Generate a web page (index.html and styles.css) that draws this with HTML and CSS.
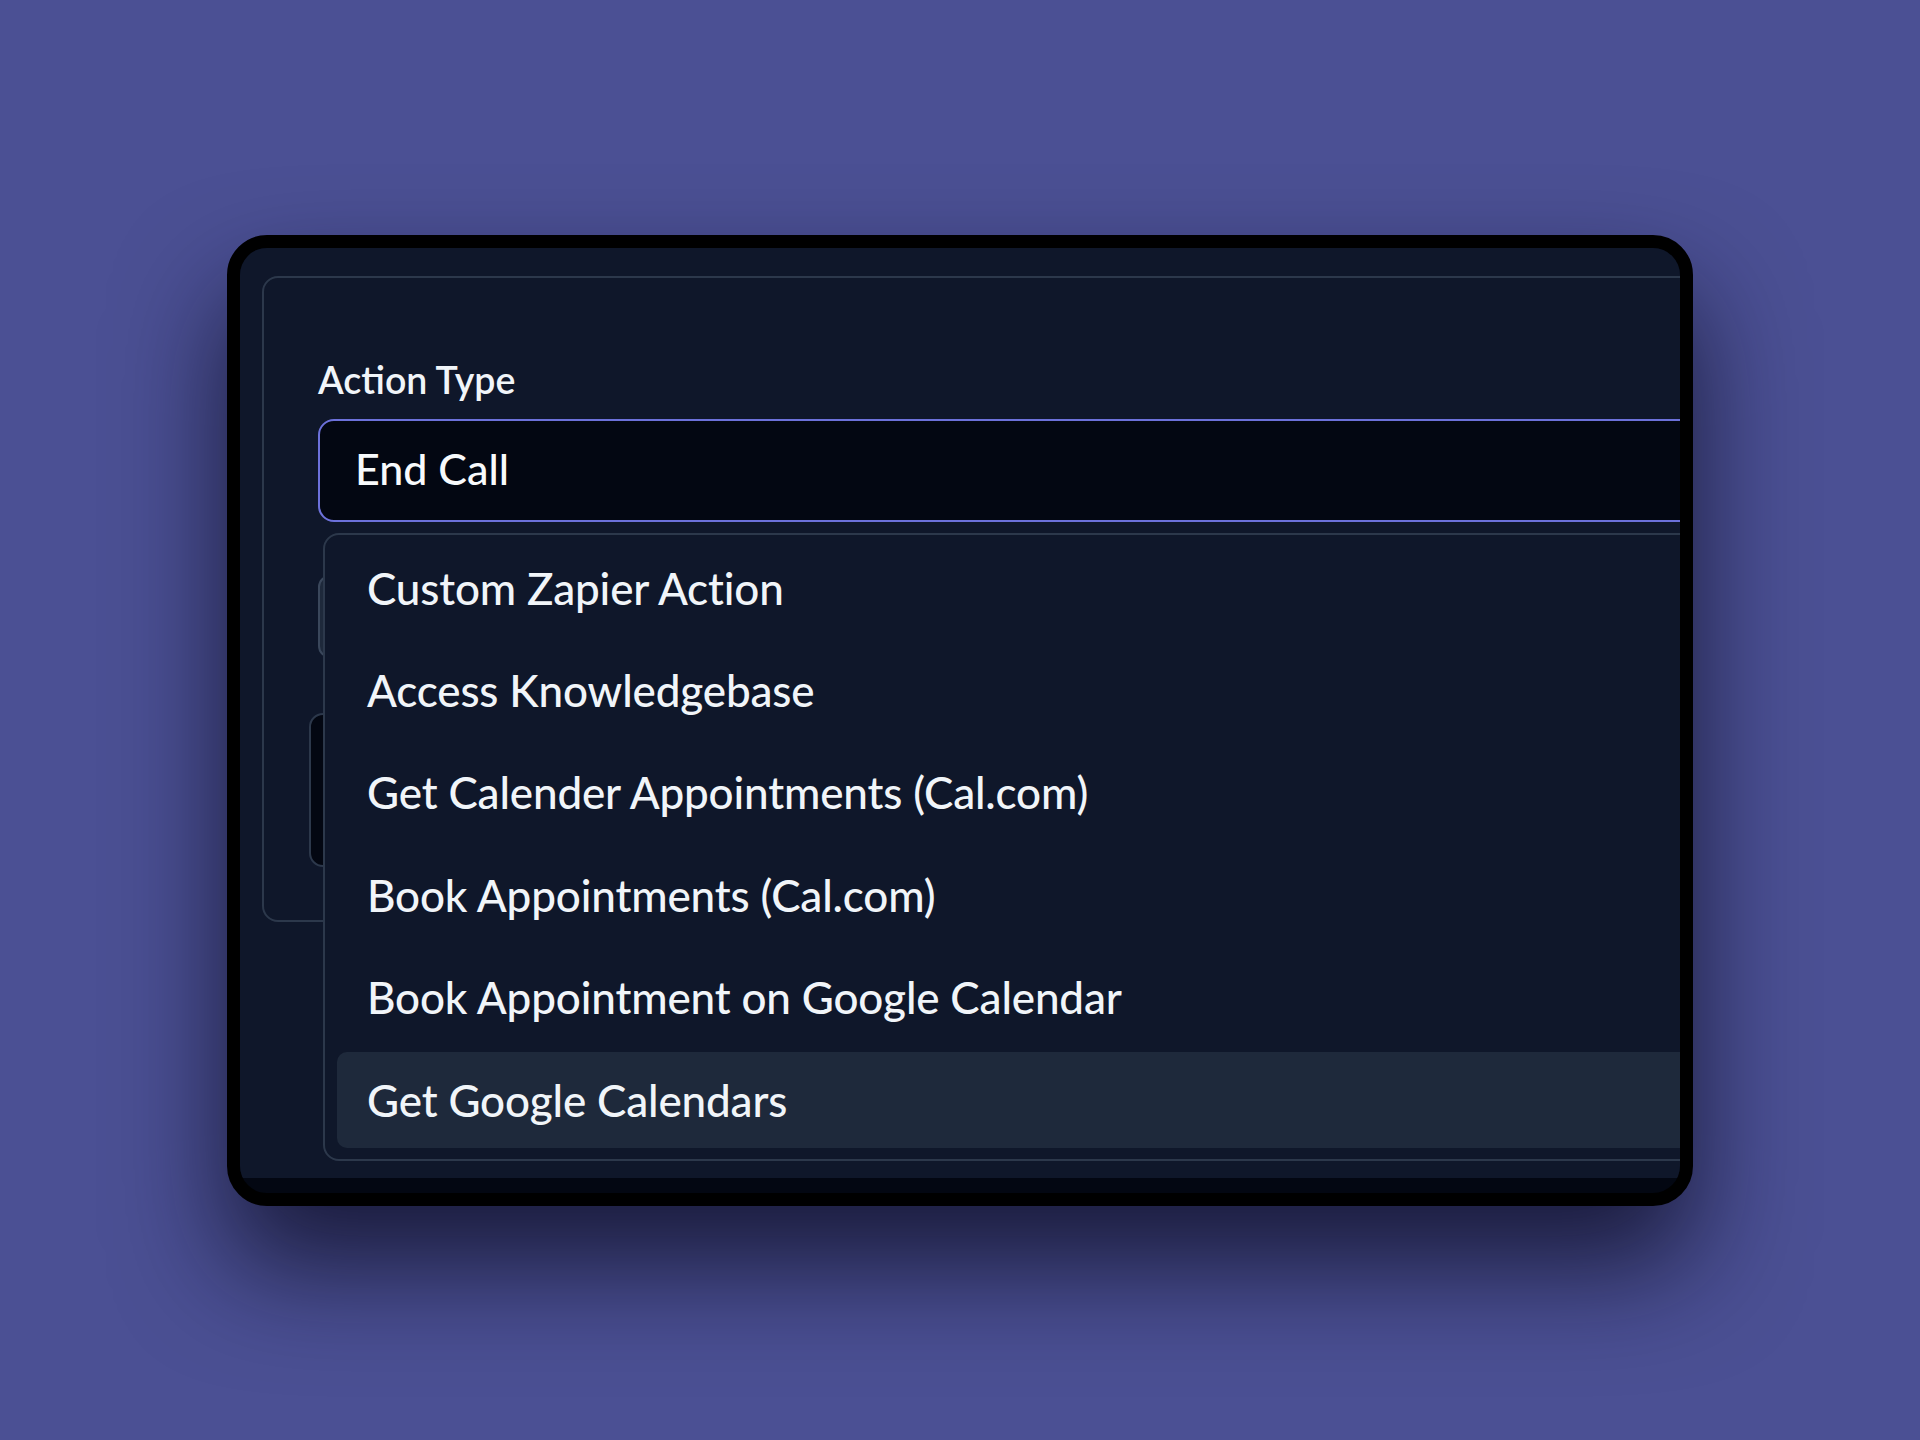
FILE: index.html
```html
<!DOCTYPE html>
<html lang="en">
<head>
    <meta charset="UTF-8">
    <meta name="viewport" content="width=device-width, initial-scale=1.0">
    <title>Action Type</title>
    <link rel="stylesheet" href="styles.css">
</head>
<body>
    <div class="frame">
        <div class="panel">
            <div class="card">
                <label class="field-label">Action Type</label>

                <!-- select with open menu -->
                <div class="select-wrap">
                    <div class="select">End Call</div>
                    <ul class="dropdown">
                        <li>Custom Zapier Action</li>
                        <li>Access Knowledgebase</li>
                        <li>Get Calender Appointments (Cal.com)</li>
                        <li>Book Appointments (Cal.com)</li>
                        <li>Book Appointment on Google Calendar</li>
                        <li class="active">Get Google Calendars</li>
                    </ul>
                </div>

                <!-- fields hidden under the menu -->
                <div class="field-short"></div>
                <div class="field-area"></div>
            </div>
        </div>
    </div>
</body>
</html>
```

FILE: styles.css
```css
body {
    margin: 0;
    height: 100vh;
    display: flex;
    align-items: center;
    justify-content: center;
    background-color: #4b5094;
    font-family: Lato, "Liberation Sans", sans-serif;
}
.frame {
    width: 1466px;
    height: 971px;
    box-sizing: border-box;
    border: 13px solid #000;
    border-radius: 40px;
    overflow: hidden;
    background-color: #030712;
    box-shadow: 0 60px 110px rgba(10, 10, 30, 0.75);
}
.panel {
    height: 930px;
    box-sizing: border-box;
    padding: 28px 0 0 22px;
    background-color: #0f172a;
}
.card {
    width: 1700px;
    box-sizing: border-box;
    border: 2px solid #2c384b;
    border-radius: 16px;
    padding: 80px 0 53px 54px;
}
.field-label {
    display: block;
    margin-bottom: 18px;
    font-size: 37.5px;
    font-weight: 600;
    line-height: 1.15;
    color: #f1f5f9;
}
.select-wrap {
    position: relative;
}
.select {
    height: 103px;
    box-sizing: border-box;
    display: flex;
    align-items: center;
    padding: 0 0 4px 35px;
    border: 2px solid #6c71da;
    border-radius: 16px;
    background-color: #030712;
    font-size: 43px;
    font-weight: 500;
    color: #f8fafc;
}
.dropdown {
    position: absolute;
    top: calc(100% + 11px);
    left: 5px;
    width: 1700px;
    height: 628px;
    box-sizing: border-box;
    margin: 0;
    padding: 5px 0 0 12px;
    list-style: none;
    display: flex;
    flex-direction: column;
    gap: 6.4px;
    border: 2px solid #2c384b;
    border-radius: 16px;
    background-color: #0f172a;
}
.dropdown li {
    flex-shrink: 0;
    height: 96px;
    display: flex;
    align-items: center;
    padding-left: 30px;
    border-radius: 10px;
    font-size: 44px;
    font-weight: 500;
    letter-spacing: -0.15px;
    color: #f1f5f9;
}
.dropdown li.active {
    background-color: #1e293b;
}
.field-short {
    height: 83px;
    box-sizing: border-box;
    margin-top: 53px;
    border: 2px solid #3a475b;
    border-radius: 12px;
    background-color: #1e293b;
}
.field-area {
    height: 154px;
    box-sizing: border-box;
    margin-top: 55px;
    margin-left: -9px;
    border: 2px solid #2c384b;
    border-radius: 14px;
    background-color: #030712;
}
```
